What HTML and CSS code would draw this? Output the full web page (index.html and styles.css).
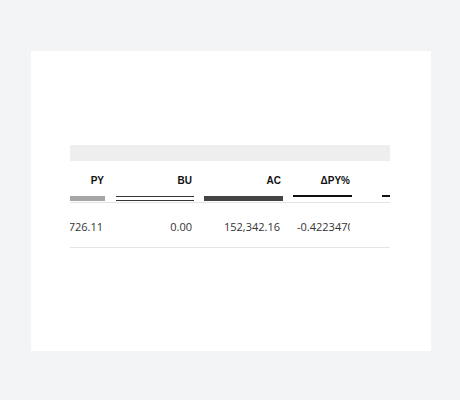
FILE: index.html
```html
<!DOCTYPE html>
<html>
<head>
<meta charset="utf-8">
<link rel="stylesheet" href="styles.css">
</head>
<body>
<div class="card">
  <div class="viewport">
    <div class="band"></div>
    <div class="row head">
      <div class="cell c-py"><span class="label">PY</span><span class="bar bar-py"></span></div>
      <div class="cell gap"></div>
      <div class="cell c-bu"><span class="label">BU</span><span class="bar bar-bu"></span></div>
      <div class="cell gap"></div>
      <div class="cell c-ac"><span class="label">AC</span><span class="bar bar-ac"></span></div>
      <div class="cell gap"></div>
      <div class="cell c-dpy"><span class="label">ΔPY%</span><span class="bar bar-line"></span></div>
      <div class="cell gap"></div>
      <div class="cell gap"></div>
      <div class="cell gap"></div>
      <div class="cell c-next"><span class="label"></span><span class="bar bar-line"></span></div>
    </div>
    <div class="row data">
      <div class="cell c-py num">726.11</div>
      <div class="cell gap"></div>
      <div class="cell c-bu num">0.00</div>
      <div class="cell gap"></div>
      <div class="cell c-ac num">152,342.16</div>
      <div class="cell gap"></div>
      <div class="cell c-dpy pct"><span class="clip">-0.4223470</span></div>
      <div class="cell gap"></div>
      <div class="cell gap"></div>
      <div class="cell gap"></div>
      <div class="cell c-next"></div>
    </div>
  </div>
</div>
</body>
</html>
```

FILE: styles.css
```css
html, body {
  margin: 0;
  padding: 0;
  background: #f3f4f6;
}
body {
  padding: 51px 0 0 31px;
}
.card {
  width: 400px;
  height: 300px;
  background: #ffffff;
  box-sizing: border-box;
  padding: 94px 41px 0 39px;
}
.viewport {
  width: 320px;
  overflow: hidden;
}
.band {
  height: 16px;
  background: #eeeeee;
}
.row {
  display: flex;
  width: 400px;
  border-bottom: 1px solid #e4e4e4;
}
.cell {
  flex: none;
  box-sizing: border-box;
}
.gap { width: 10px; }
.c-py { width: 36px; }
.c-bu { width: 78px; }
.c-ac { width: 79px; }
.c-dpy { width: 59px; }
.c-next { width: 60px; }

.head .cell {
  display: flex;
  flex-direction: column;
  padding-top: 14px;
  height: 41px;
}
.label {
  display: block;
  height: 12px;
  line-height: 12px;
  font-family: "Liberation Sans", Arial, sans-serif;
  font-weight: bold;
  font-size: 10px;
  color: #111111;
  text-align: right;
  padding-right: 2px;
  white-space: nowrap;
}
.bar {
  display: block;
  margin-top: 9px;
  height: 5px;
  box-sizing: border-box;
}
.bar-py { background: #a6a6a6; margin-right: 1px; }
.bar-bu { border-top: 1.5px solid #333333; border-bottom: 1.5px solid #333333; }
.bar-ac { background: #444444; }
.bar-line { height: 2px; margin-top: 8px; background: #111111; }

.data .cell {
  height: 44px;
  padding-top: 16px;
  line-height: 15px;
  font-family: "Open Sans", sans-serif;
  font-size: 11px;
  color: #333333;
  white-space: nowrap;
  overflow: hidden;
}
.num { text-align: right; padding-right: 2px; }
.c-py.num { padding-right: 3px; direction: rtl; }
.c-bu.num { padding-right: 2px; }
.c-ac.num { padding-right: 3px; }
.pct { padding-left: 4px; }
.clip {
  display: block;
  width: 53px;
  overflow: hidden;
}
```
